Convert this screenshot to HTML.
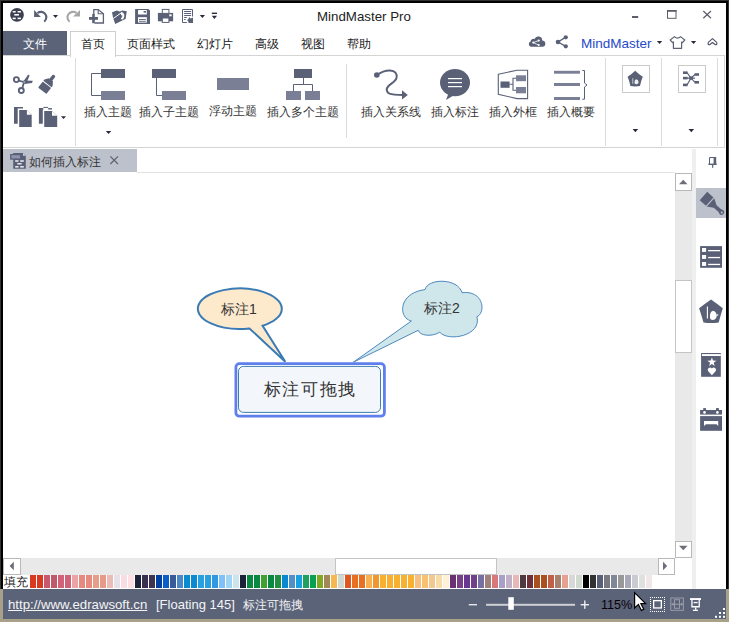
<!DOCTYPE html>
<html><head><meta charset="utf-8">
<style>
html,body{margin:0;padding:0;}
body{width:729px;height:622px;overflow:hidden;position:relative;background:#fff;font-family:"Liberation Sans",sans-serif;color:#333;}
.a{position:absolute;}
.t{position:absolute;font-size:12px;line-height:14px;white-space:nowrap;color:#333;}
svg{position:absolute;overflow:visible;}
</style></head><body>
<!-- window frame -->
<div class="a" style="left:0;top:0;width:729px;height:589px;background:#000;"></div>
<div class="a" style="left:0;top:0;width:729px;height:1px;background:#323232;"></div>
<div class="a" style="left:0;top:0;width:1px;height:589px;background:#323232;"></div>
<div class="a" style="left:728px;top:0;width:1px;height:589px;background:#323232;"></div>
<div class="a" style="left:0;top:589px;width:729px;height:33px;background:#a9a08a;"></div>
<!-- client area -->
<div class="a" style="left:3px;top:3px;width:723px;height:586px;background:#fff;"></div>

<!-- TITLE BAR -->
<div class="t" style="left:317px;top:9px;font-size:13.3px;line-height:15px;color:#222;">MindMaster Pro</div>

<!-- TAB ROW -->
<div class="a" style="left:3px;top:31px;width:64px;height:24px;background:#5b6379;"></div>
<div class="t" style="left:23px;top:37px;color:#fff;">文件</div>
<div class="a" style="left:70px;top:31px;width:44px;height:25px;border:1px solid #cfcfcf;border-bottom:none;background:#fff;"></div>
<div class="t" style="left:81px;top:37px;color:#222;">首页</div>
<div class="t" style="left:127px;top:37px;color:#222;">页面样式</div>
<div class="t" style="left:197px;top:37px;color:#222;">幻灯片</div>
<div class="t" style="left:255px;top:37px;color:#222;">高级</div>
<div class="t" style="left:301px;top:37px;color:#222;">视图</div>
<div class="t" style="left:347px;top:37px;color:#222;">帮助</div>
<div class="t" style="left:581px;top:36px;font-size:13.5px;line-height:15px;color:#2549c6;">MindMaster</div>

<!-- RIBBON PANEL -->
<div class="a" style="left:3px;top:55px;width:67px;height:1px;background:#d4d4d4;"></div>
<div class="a" style="left:116px;top:55px;width:609px;height:1px;background:#d4d4d4;"></div>
<div class="a" style="left:724px;top:55px;width:1px;height:92px;background:#d4d4d4;"></div>
<div class="a" style="left:3px;top:147px;width:722px;height:1px;background:#d4d4d4;"></div>
<div class="a" style="left:75px;top:58px;width:1px;height:88px;background:#dcdcdc;"></div>
<div class="a" style="left:346px;top:64px;width:1px;height:74px;background:#dcdcdc;"></div>
<div class="a" style="left:605px;top:58px;width:1px;height:88px;background:#dcdcdc;"></div>
<div class="a" style="left:661px;top:58px;width:1px;height:88px;background:#dcdcdc;"></div>
<div class="a" style="left:717px;top:58px;width:1px;height:88px;background:#dcdcdc;"></div>

<div class="t" style="left:84px;top:105px;">插入主题</div>
<div class="t" style="left:139px;top:105px;">插入子主题</div>
<div class="t" style="left:209px;top:104px;">浮动主题</div>
<div class="t" style="left:267px;top:105px;">插入多个主题</div>
<div class="t" style="left:361px;top:105px;">插入关系线</div>
<div class="t" style="left:431px;top:105px;">插入标注</div>
<div class="t" style="left:489px;top:105px;">插入外框</div>
<div class="t" style="left:547px;top:105px;">插入概要</div>

<!-- DOC TAB BAR -->
<div class="a" style="left:3px;top:149px;width:134px;height:23px;background:#bdc1cc;"></div>
<div class="t" style="left:29px;top:155px;">如何插入标注</div>
<div class="a" style="left:137px;top:172px;width:538px;height:1px;background:#e2e2e2;"></div>

<!-- right strip + panel -->
<div class="a" style="left:692px;top:149px;width:4px;height:440px;background:#eef0f0;"></div>
<div class="a" style="left:696px;top:188px;width:30px;height:30px;background:#bdc1cc;"></div>

<!-- V SCROLLBAR -->
<div class="a" style="left:675px;top:173px;width:17px;height:385px;background:#e9e9e9;"></div>
<div class="a" style="left:675px;top:173px;width:15px;height:16px;border:1px solid #b8b8b8;background:#fff;"></div>
<div class="a" style="left:675px;top:280px;width:15px;height:71px;border:1px solid #c4c4c4;background:#fff;"></div>
<div class="a" style="left:675px;top:541px;width:15px;height:15px;border:1px solid #b8b8b8;background:#fff;"></div>
<div class="a" style="left:675px;top:558px;width:17px;height:31px;background:#fff;"></div>

<!-- H SCROLLBAR -->
<div class="a" style="left:3px;top:558px;width:672px;height:17px;background:#e9e9e9;"></div>
<div class="a" style="left:3px;top:558px;width:16px;height:15px;border:1px solid #b8b8b8;background:#fff;"></div>
<div class="a" style="left:335px;top:558px;width:160px;height:15px;border:1px solid #c4c4c4;background:#fff;"></div>
<div class="a" style="left:658px;top:558px;width:15px;height:15px;border:1px solid #b8b8b8;background:#fff;"></div>

<!-- PALETTE -->
<div class="t" style="left:4px;top:575px;color:#222;">填充</div>
<svg width="729" height="622" style="left:0;top:0;"><rect x="30" y="575" width="6" height="13" fill="#d93a1f"/><rect x="37" y="575" width="6" height="13" fill="#d93a1f"/><rect x="44" y="575" width="6" height="13" fill="#c95a6e"/><rect x="51" y="575" width="6" height="13" fill="#c05a6a"/><rect x="58" y="575" width="6" height="13" fill="#d06378"/><rect x="65" y="575" width="6" height="13" fill="#d0637a"/><rect x="72" y="575" width="6" height="13" fill="#e9a4a6"/><rect x="79" y="575" width="6" height="13" fill="#e8897f"/><rect x="86" y="575" width="6" height="13" fill="#e88a80"/><rect x="93" y="575" width="6" height="13" fill="#e59e88"/><rect x="100" y="575" width="6" height="13" fill="#e59b88"/><rect x="107" y="575" width="6" height="13" fill="#eabcb8"/><rect x="114" y="575" width="6" height="13" fill="#e8e0e8"/><rect x="121" y="575" width="6" height="13" fill="#fadde3"/><rect x="128" y="575" width="6" height="13" fill="#fde0e4"/><rect x="135" y="575" width="6" height="13" fill="#1c2238"/><rect x="142" y="575" width="6" height="13" fill="#3a3050"/><rect x="149" y="575" width="6" height="13" fill="#3d3352"/><rect x="156" y="575" width="6" height="13" fill="#0040a0"/><rect x="163" y="575" width="6" height="13" fill="#0a5ec8"/><rect x="170" y="575" width="6" height="13" fill="#3a5a98"/><rect x="177" y="575" width="6" height="13" fill="#4a88c8"/><rect x="184" y="575" width="6" height="13" fill="#0a8ad0"/><rect x="191" y="575" width="6" height="13" fill="#0a8ad0"/><rect x="198" y="575" width="6" height="13" fill="#28a0e0"/><rect x="205" y="575" width="6" height="13" fill="#28a0e0"/><rect x="212" y="575" width="6" height="13" fill="#3098e0"/><rect x="219" y="575" width="6" height="13" fill="#80c0f8"/><rect x="226" y="575" width="6" height="13" fill="#a0d4f4"/><rect x="233" y="575" width="6" height="13" fill="#cce4ee"/><rect x="240" y="575" width="6" height="13" fill="#1c2238"/><rect x="247" y="575" width="6" height="13" fill="#088840"/><rect x="254" y="575" width="6" height="13" fill="#088840"/><rect x="261" y="575" width="6" height="13" fill="#40a030"/><rect x="268" y="575" width="6" height="13" fill="#088840"/><rect x="275" y="575" width="6" height="13" fill="#209040"/><rect x="282" y="575" width="6" height="13" fill="#0888d0"/><rect x="289" y="575" width="6" height="13" fill="#5090c8"/><rect x="296" y="575" width="6" height="13" fill="#18a0e0"/><rect x="303" y="575" width="6" height="13" fill="#20a060"/><rect x="310" y="575" width="6" height="13" fill="#08a050"/><rect x="317" y="575" width="6" height="13" fill="#80a820"/><rect x="324" y="575" width="6" height="13" fill="#a08858"/><rect x="331" y="575" width="6" height="13" fill="#f8b850"/><rect x="338" y="575" width="6" height="13" fill="#d0d8d0"/><rect x="345" y="575" width="6" height="13" fill="#e05820"/><rect x="352" y="575" width="6" height="13" fill="#e87020"/><rect x="359" y="575" width="6" height="13" fill="#e87020"/><rect x="366" y="575" width="6" height="13" fill="#f8b050"/><rect x="373" y="575" width="6" height="13" fill="#f09830"/><rect x="380" y="575" width="6" height="13" fill="#f8b030"/><rect x="387" y="575" width="6" height="13" fill="#f8b030"/><rect x="394" y="575" width="6" height="13" fill="#f8b030"/><rect x="401" y="575" width="6" height="13" fill="#f8b030"/><rect x="408" y="575" width="6" height="13" fill="#f8b030"/><rect x="415" y="575" width="6" height="13" fill="#f8c080"/><rect x="422" y="575" width="6" height="13" fill="#f8c070"/><rect x="429" y="575" width="6" height="13" fill="#f0c890"/><rect x="436" y="575" width="6" height="13" fill="#f8dca8"/><rect x="443" y="575" width="6" height="13" fill="#fff0d8"/><rect x="450" y="575" width="6" height="13" fill="#6a3070"/><rect x="457" y="575" width="6" height="13" fill="#784088"/><rect x="464" y="575" width="6" height="13" fill="#683890"/><rect x="471" y="575" width="6" height="13" fill="#704088"/><rect x="478" y="575" width="6" height="13" fill="#7870a0"/><rect x="485" y="575" width="6" height="13" fill="#a08078"/><rect x="492" y="575" width="6" height="13" fill="#d87878"/><rect x="499" y="575" width="6" height="13" fill="#a8a0c8"/><rect x="506" y="575" width="6" height="13" fill="#c0b0c8"/><rect x="513" y="575" width="6" height="13" fill="#e8b8b8"/><rect x="520" y="575" width="6" height="13" fill="#503840"/><rect x="527" y="575" width="6" height="13" fill="#703038"/><rect x="534" y="575" width="6" height="13" fill="#a85020"/><rect x="541" y="575" width="6" height="13" fill="#a85020"/><rect x="548" y="575" width="6" height="13" fill="#c06048"/><rect x="555" y="575" width="6" height="13" fill="#a88070"/><rect x="562" y="575" width="6" height="13" fill="#e8a090"/><rect x="569" y="575" width="6" height="13" fill="#d8d8d8"/><rect x="576" y="575" width="6" height="13" fill="#d0d8d0"/><rect x="583" y="575" width="6" height="13" fill="#000000"/><rect x="590" y="575" width="6" height="13" fill="#323232"/><rect x="597" y="575" width="6" height="13" fill="#586078"/><rect x="604" y="575" width="6" height="13" fill="#787880"/><rect x="611" y="575" width="6" height="13" fill="#808898"/><rect x="618" y="575" width="6" height="13" fill="#989898"/><rect x="625" y="575" width="6" height="13" fill="#a8a8b8"/><rect x="632" y="575" width="6" height="13" fill="#c8ccd0"/><rect x="639" y="575" width="6" height="13" fill="#e0e0e0"/><rect x="646" y="575" width="6" height="13" fill="#f0e8e8"/></svg>

<!-- STATUS BAR -->
<div class="a" style="left:3px;top:589px;width:723px;height:30px;background:#5b6379;"></div>
<div class="t" style="left:8px;top:597px;font-size:13.2px;line-height:15px;color:#f4f4f4;text-decoration:underline;">http://www.edrawsoft.cn</div>
<div class="t" style="left:156px;top:597px;font-size:13px;line-height:15px;color:#f4f4f4;">[Floating 145]</div>
<div class="t" style="left:243px;top:598px;color:#f4f4f4;">标注可拖拽</div>
<div class="t" style="left:601px;top:598px;font-size:12.6px;line-height:15px;color:#0a0008;">115%</div>


<!-- ICONS TITLE -->
<svg width="729" height="622" style="left:0;top:0;">
<g fill="#5a6177">
 <circle cx="17" cy="14.8" r="6.9" fill="#3d4152"/>
 <rect x="12.7" y="11" width="3" height="1.5" fill="#fff"/>
 <rect x="17.6" y="11" width="3.3" height="1.5" fill="#fff"/>
 <rect x="14.3" y="14" width="4.6" height="1.6" fill="#fff"/>
 <rect x="12.7" y="17.6" width="3" height="1.6" fill="#fff"/>
 <rect x="17.6" y="17.6" width="3.3" height="1.6" fill="#fff"/>
 <!-- undo -->
 <polygon points="34.1,9.9 34.1,16.9 40.9,16.9"/>
 <path d="M37.5,13 A4.8,4.8 0 1 1 44.2,21.6" fill="none" stroke="#5a6177" stroke-width="2.1"/>
 <polygon points="53,15 58,15 55.5,18" fill="#2c2840"/>
 <!-- redo -->
 <polygon points="80,10 80,16.6 73,16.6" fill="#a6a6a6"/>
 <path d="M76.5,13 A4.8,4.8 0 1 0 69.6,21.7" fill="none" stroke="#a6a6a6" stroke-width="2.1"/>
 <!-- new -->
 <path d="M93.8,14 V9.6 H98.2 L103.4,13.8 V23 H94.5" fill="none" stroke="#5a6177" stroke-width="1.3"/>
 <path d="M98.2,9.6 V13.8 H103.4" fill="none" stroke="#5a6177" stroke-width="1.1"/>
 <rect x="89" y="17" width="9" height="2.8"/>
 <rect x="92.2" y="14" width="2.6" height="9.2"/>
 <!-- open -->
 <path d="M112,12.2 L117,10.6 L119.5,11.6 L122.5,10.4 L126.8,11.2 L125.6,19 L123.3,20 L115.2,23.9 L113,17.5 Z"/>
 <path d="M113.4,18.4 L121.6,12.6" stroke="#fff" stroke-width="1"/>
 <path d="M121,11.8 Q124.8,12.8 124.3,16.6 Q123.8,19 122,19.8 L120.8,18.6 Q122.6,17 122.4,15.6 L121,15.2 Z" fill="#fff"/>
 <!-- save -->
 <path d="M135.1,8.9 H148.3 L150,10.6 V23.9 H135.1 Z"/>
 <rect x="138" y="10" width="8.8" height="4.4" rx="0.5" fill="#fff"/>
 <rect x="143.6" y="11" width="2.4" height="1.6"/>
 <rect x="138" y="17.2" width="8.8" height="5.4" fill="#fff"/>
 <rect x="139" y="19" width="6.8" height="0.9"/>
 <rect x="139" y="20.8" width="6.8" height="0.9"/>
 <!-- print -->
 <rect x="157.9" y="12.9" width="15.2" height="8.4"/>
 <rect x="162.3" y="9.4" width="6.6" height="4" fill="#fff" stroke="#5a6177" stroke-width="1"/>
 <rect x="162.3" y="18" width="6.6" height="4.4" fill="#fff" stroke="#5a6177" stroke-width="1"/>
 <rect x="169.3" y="14.3" width="2.3" height="2" fill="#fff"/>
 <!-- export -->
 <path d="M186.8,22.5 H182.5 V9.5 H192.5 V16.5" fill="none" stroke="#5a6177" stroke-width="1"/>
 <rect x="184.1" y="11" width="7" height="1"/>
 <rect x="184.1" y="13" width="7" height="1"/>
 <rect x="184.1" y="15" width="7" height="1"/>
 <rect x="184.1" y="17" width="2.7" height="1"/>
 <rect x="184.1" y="19" width="1.6" height="1"/>
 <polygon points="189.2,17 190.5,18.6 192,18 193,17.6 193,23 188.5,23 188.5,21.8 187.2,20.2 188.2,19.2"/>
 <polygon points="199.7,15 205,15 202.4,18" fill="#2c2840"/>
 <rect x="211.8" y="12.6" width="5.2" height="1.4" fill="#2c2840"/>
 <polygon points="211.8,15.7 217,15.7 214.4,19" fill="#2c2840"/>
 <!-- window buttons -->
 <rect x="632" y="16" width="6.2" height="2" fill="#5e5e6a"/>
 <rect x="667.5" y="10.5" width="8.5" height="7.8" fill="none" stroke="#5e5e6a" stroke-width="1"/>
 <rect x="667" y="10" width="9.5" height="1.8" fill="#5e5e6a"/>
 <path d="M703.3,11 L711,18.3 M711,11 L703.3,18.3" stroke="#5e5e6a" stroke-width="1.2"/>
</g>
</svg>


<!-- ICONS RIBBON -->
<svg width="729" height="622" style="left:0;top:0;">
<g fill="#5a6177">
 <!-- cloud -->
 <path d="M531,46.7 A2.7,2.7 0 0 1 530.6,41.5 A2.8,2.8 0 0 1 534.5,39 A4,4 0 0 1 542.2,40.6 A3.1,3.1 0 0 1 543,46.7 Z"/>
 <g stroke="#fff" stroke-width="0.8" fill="#fff">
  <line x1="533.3" y1="42.6" x2="538.7" y2="40.6"/><line x1="533.3" y1="42.6" x2="538.7" y2="45"/>
 </g>
 <circle cx="533.3" cy="42.6" r="1.1" fill="#fff"/><circle cx="538.7" cy="40.6" r="1.1" fill="#fff"/><circle cx="538.7" cy="45" r="1.1" fill="#fff"/>
 <!-- share -->
 <path d="M558,42 L565.8,37.1 M558,42 L565.8,46.4" stroke="#5a6177" stroke-width="1.4"/>
 <circle cx="565.8" cy="37.3" r="2.1"/><circle cx="558" cy="42" r="2.3"/><circle cx="565.8" cy="46.3" r="2.1"/>
 <polygon points="656.9,41 662.2,41 659.55,44" fill="#2c2840"/>
 <!-- shirt -->
 <path d="M674.5,36.6 L670.2,40 L672.6,42.7 L673.4,42 V48.3 H681.6 V42 L682.4,42.7 L684.8,40 L680.5,36.6 Q677.5,39.5 674.5,36.6 Z" fill="none" stroke="#5e6272" stroke-width="1.2" stroke-linejoin="round"/>
 <polygon points="690.9,41 696.2,41 693.55,44" fill="#2c2840"/>
 <!-- collapse chevron -->
 <path d="M712.5,38.6 L716.7,42.4 Q717.6,44.7 715.4,44.7 L712.5,42.5 L709.6,44.7 Q707.4,44.7 708.3,42.4 Z" fill="none" stroke="#4e5266" stroke-width="1.1" stroke-linejoin="round"/>

 <!-- scissors -->
 <circle cx="16.4" cy="79.6" r="2.5" fill="none" stroke="#5a6177" stroke-width="1.9"/>
 <circle cx="21.3" cy="90.5" r="2.5" fill="none" stroke="#5a6177" stroke-width="1.9"/>
 <path d="M18.6,80.6 L24,82 M22.3,88.2 L24,82" stroke="#5a6177" stroke-width="1.8"/>
 <polygon points="22.4,82.8 28.3,74.6 29.6,75.4 26.4,83.2"/>
 <polygon points="23.3,80.6 32.8,80.8 32,83.1 24.5,84"/>
 <circle cx="24.2" cy="82" r="0.8" fill="#c8c8cc"/>
 <!-- brush -->
 <g transform="translate(47.3,84.3) rotate(38)">
  <rect x="-1.7" y="-11.5" width="3.4" height="6.5" rx="1.3"/>
  <polygon points="-2.6,-5.8 2.6,-5.8 5.2,-2 5.2,-0.3 -5.2,-0.3 -5.2,-2"/>
  <rect x="-5.2" y="0.6" width="10.4" height="7.6" rx="0.6"/>
 </g>
 <!-- copy -->
 <path d="M14,107.1 H23 V108.6 H17.7 V123.8 H14 Z"/>
 <path d="M19.2,110 H26.9 L31.7,114.8 V126.9 H19.2 Z"/>
 <polygon points="26.9,110 31.7,114.8 26.9,114.8" fill="#fff"/>
 <!-- paste -->
 <path d="M38.9,108.1 H43.3 V109.5 H42.8 V123.8 H38.9 Z"/>
 <rect x="43.3" y="106.9" width="4.8" height="1"/>
 <rect x="48.1" y="108.1" width="3.9" height="1.4"/>
 <path d="M44.2,111 H52 L57.2,115.8 V126.9 H44.2 Z"/>
 <polygon points="52,111 57.2,115.8 52,115.8" fill="#fff"/>
 <polygon points="61,116.2 66,116.2 63.5,119" fill="#2c2840"/>

 <!-- insert topic -->
 <rect x="101" y="69" width="24" height="9"/>
 <rect x="101" y="91" width="24" height="9" fill="#7a7f96"/>
 <path d="M101,73.5 H91.5 V95.5 H101" fill="none" stroke="#5a6177" stroke-width="1"/>
 <polygon points="105.8,131 111.3,131 108.55,134" fill="#2c2840"/>
 <!-- insert subtopic -->
 <rect x="152" y="69" width="24" height="9"/>
 <rect x="162" y="91" width="24" height="9" fill="#7a7f96"/>
 <path d="M156.5,78 V95.5 H162" fill="none" stroke="#5a6177" stroke-width="1"/>
 <!-- floating -->
 <rect x="217" y="78" width="32" height="12" fill="#7a7f96"/>
 <!-- multi -->
 <rect x="294" y="69" width="18" height="9"/>
 <rect x="286" y="91" width="15" height="9" fill="#7a7f96"/>
 <rect x="305" y="91" width="15" height="9" fill="#7a7f96"/>
 <path d="M303.5,78 V84.5 M293.5,91 V84.5 H312.5 V91" fill="none" stroke="#5a6177" stroke-width="1"/>
 <!-- relationship -->
 <circle cx="376.8" cy="75" r="2.8"/>
 <path d="M376.8,75 C381,72 386,70.3 390,70.4 C395,70.5 397.5,74 396.5,78 C395.5,81.5 391,83.5 388.5,86 C386,88.5 386,92 389.5,93.6 C392,94.6 396,94.9 403,94.9" fill="none" stroke="#5a6177" stroke-width="2"/>
 <polygon points="402,90.3 407.8,94.9 402,99.5"/>
 <!-- callout -->
 <ellipse cx="455" cy="82.6" rx="15" ry="13.6"/>
 <polygon points="449,92 446,100 456,94"/>
 <rect x="448" y="78" width="14" height="1.2" fill="#fff"/>
 <rect x="448" y="82" width="14" height="1.2" fill="#fff"/>
 <rect x="448" y="86" width="14" height="1.2" fill="#fff"/>
 <!-- boundary -->
 <path d="M498.3,74.2 L517,70.3 H527.6 V98.6 H517 L498.3,94.3 Z" fill="none" stroke="#5a6177" stroke-width="1.1"/>
 <rect x="500.5" y="81.5" width="9.1" height="6.3"/>
 <path d="M509.4,84.2 H513 V78.3 H516 M513,84.2 V90.2 H516" fill="none" stroke="#5a6177" stroke-width="1.1"/>
 <rect x="516" y="75.3" width="10" height="5.9" fill="#7a7f96"/>
 <rect x="516" y="87" width="10" height="6.3" fill="#7a7f96"/>
 <!-- summary -->
 <rect x="554" y="70.8" width="26" height="2.9" fill="#7a7f96"/>
 <rect x="554" y="83" width="26" height="3" fill="#7a7f96"/>
 <rect x="554" y="97" width="26" height="3" fill="#7a7f96"/>
 <path d="M582.3,70.5 H584.5 V83 L587,85 L584.5,87 V99.2 H582.3" fill="none" stroke="#5a6177" stroke-width="1"/>
 <!-- style boxes -->
 <rect x="622.5" y="65.5" width="27" height="27" fill="none" stroke="#cacaca" stroke-width="1"/>
 <rect x="678.5" y="65.5" width="27" height="27" fill="none" stroke="#cacaca" stroke-width="1"/>
  <path d="M635.2,70.8 Q639,74.5 642.8,76.8 Q641,81 640,86 Q635.2,86.8 630.4,86 Q629.4,81 627.6,76.8 Q631.4,74.5 635.2,70.8 Z"/>
 <path d="M634.6,83.2 Q634.3,79.6 636.3,79.2 Q638.6,79.6 638.6,82.2 Q638.2,84.2 636.4,84.2 Q635,84.2 634.6,83.2 Z" fill="#fff" opacity="0.9"/>
 <path d="M632.8,78.2 V83.8" stroke="#fff" stroke-width="0.8" opacity="0.8"/>
 <polygon points="632.6,129 638.2,129 635.4,132.2" fill="#2c2840"/>
 <polygon points="688.5,129 694.1,129 691.3,132.2" fill="#2c2840"/>
 <!-- cross icon -->
 <path d="M687,72.7 L691,78.1 L695,74.5 M687,78.1 H695 M687,84.9 L691,78.1 L695,82.3" fill="none" stroke="#5a6177" stroke-width="1.1"/>
 <rect x="683" y="71.4" width="4.6" height="2.6"/>
 <rect x="683" y="76.8" width="4.6" height="2.6"/>
 <rect x="683" y="83.6" width="4.6" height="2.6"/>
 <rect x="689.2" y="76.4" width="3.6" height="3.4"/>
 <rect x="694.6" y="73.2" width="4.4" height="2.6"/>
 <rect x="694.6" y="81" width="4.4" height="2.6"/>
 <!-- doc tab icon -->
 <path d="M13.2,153 H23 L25.8,155.8 V168.7 H13.2 Z"/>
 <rect x="10.1" y="154" width="11" height="5.7"/>
 <rect x="11.4" y="155.2" width="8.6" height="3.2" fill="#8f94aa"/>
 <g fill="#e6e8ee">
 <rect x="15.2" y="160.2" width="3.3" height="1.6"/><rect x="20.2" y="160.2" width="3.6" height="1.6"/>
 <rect x="17.3" y="163" width="4.3" height="1.5"/>
 <rect x="15.2" y="166" width="3.3" height="1.6"/><rect x="20.2" y="166" width="3.6" height="1.6"/>
 </g>
 <polygon points="23,153 25.8,155.8 23,155.8" fill="#d0d3dc"/>
 <path d="M110.3,156.3 L118,164 M118,156.3 L110.3,164" stroke="#5e6272" stroke-width="1.2"/>
</g>
</svg>

<!-- PANEL -->
<svg width="729" height="622" style="left:0;top:0;">
<g fill="#5a6177">
 <!-- pin -->
 <path d="M709.5,164 V157.5 H715.5 V164" fill="none" stroke="#5a6177" stroke-width="1"/>
 <rect x="713.6" y="157" width="2.6" height="7"/>
 <rect x="708.4" y="163.6" width="8.3" height="1.4"/>
 <rect x="712.1" y="165" width="1.2" height="2.8"/>
 <!-- brush selected -->
 <g transform="translate(713.5,205) rotate(-48)">
  <rect x="-5.6" y="-13.5" width="11.2" height="8.4"/>
  <path d="M-5.6,-4 H5.6 L2.2,1.8 H-2.2 Z"/>
  <rect x="-1.9" y="1" width="3.8" height="9"/>
  <circle cx="0" cy="10.8" r="2.6"/>
  <circle cx="0" cy="11.2" r="1" fill="#bdc1cc"/>
 </g>
 <!-- outline -->
 <rect x="700.1" y="246.1" width="21.9" height="21.7"/>
 <g fill="#fff">
 <rect x="702" y="248" width="4.1" height="3.9"/><rect x="702" y="255" width="4.1" height="3.9"/><rect x="702" y="262" width="4.1" height="3.9"/>
 <rect x="708.1" y="250" width="12" height="1.3"/><rect x="708.1" y="256.9" width="12" height="1.3"/><rect x="708.1" y="263.8" width="12" height="1.3"/>
 </g>
 <!-- pentagon -->
 <path d="M711,299.4 Q717,303.5 722.8,308.3 Q720.5,315.5 718.7,322.5 Q711,323.5 703.5,322.5 Q701.5,315.5 699.1,308.3 Q705,303.5 711,299.4 Z"/>
 <path d="M710,318 Q709.5,311.5 713,310.8 Q716.5,311.5 716.8,316 Q716,320 712.5,320 Q710.5,319.8 710,318 Z" fill="#fff"/>
 <path d="M707.4,306.6 V318.5" stroke="#fff" stroke-width="1.1"/>
 <circle cx="717.5" cy="315" r="0.8" fill="#fff"/>
 <!-- clipart -->
 <rect x="701.1" y="353" width="19.7" height="23.8"/>
 <rect x="702" y="354.1" width="18.8" height="1.9" fill="#fff"/>
 <polygon fill="#fff" points="711.9,357.4 713,360.6 716.4,360.7 713.7,362.8 714.7,366.1 711.9,364.1 709.1,366.1 710.1,362.8 707.4,360.7 710.8,360.6"/>
 <path fill="#fff" d="M711.9,375.2 L708.2,371.3 A2.1,2.1 0 0 1 711.9,368.6 A2.1,2.1 0 0 1 715.6,371.3 Z"/>
 <!-- calendar -->
 <rect x="700.1" y="410" width="21.9" height="4.6"/>
 <rect x="703.2" y="408.1" width="2.8" height="2.5"/><rect x="716" y="408.1" width="2.9" height="2.5"/>
 <circle cx="704.5" cy="412.4" r="1.3" fill="#fff"/><circle cx="717.4" cy="412.4" r="1.3" fill="#fff"/>
 <rect x="700.1" y="416.1" width="21.9" height="14.7"/>
 <path d="M704,420.9 H718.2 V426 L716.5,424.2 H706 L704,426 Z" fill="#fff"/>
 <!-- scroll arrows -->
 <polygon points="679,184.2 687.5,184.2 683.25,179.8" fill="#6e6d7a"/>
 <polygon points="679,545.8 687.5,545.8 683.25,550.2" fill="#6e6d7a"/>
 <polygon points="13.8,561.8 13.8,570.2 9.6,566" fill="#6e6d7a"/>
 <polygon points="663,561.8 663,570.2 667.2,566" fill="#6e6d7a"/>
</g>
</svg>

<!-- STATUS ICONS -->
<svg width="729" height="622" style="left:0;top:0;">
 <!-- slider -->
 <rect x="468.8" y="604" width="8.2" height="1.4" fill="#e8e8ec"/>
 <rect x="486" y="603.8" width="89" height="2" fill="#cfd0d4"/>
 <rect x="508.3" y="597.2" width="5.5" height="12.6" fill="#fff"/>
 <rect x="580.7" y="604" width="8.3" height="1.4" fill="#f0f0f2"/>
 <rect x="584.1" y="600.5" width="1.4" height="8.3" fill="#f0f0f2"/>
 <!-- fit icon -->
 <g fill="#fff"><rect x="650" y="597" width="1" height="1"/><rect x="650" y="611" width="1" height="1"/><rect x="652" y="597" width="1" height="1"/><rect x="652" y="611" width="1" height="1"/><rect x="654" y="597" width="1" height="1"/><rect x="654" y="611" width="1" height="1"/><rect x="656" y="597" width="1" height="1"/><rect x="656" y="611" width="1" height="1"/><rect x="658" y="597" width="1" height="1"/><rect x="658" y="611" width="1" height="1"/><rect x="660" y="597" width="1" height="1"/><rect x="660" y="611" width="1" height="1"/><rect x="662" y="597" width="1" height="1"/><rect x="662" y="611" width="1" height="1"/><rect x="664" y="597" width="1" height="1"/><rect x="664" y="611" width="1" height="1"/><rect x="650" y="599" width="1" height="1"/><rect x="664" y="599" width="1" height="1"/><rect x="650" y="601" width="1" height="1"/><rect x="664" y="601" width="1" height="1"/><rect x="650" y="603" width="1" height="1"/><rect x="664" y="603" width="1" height="1"/><rect x="650" y="605" width="1" height="1"/><rect x="664" y="605" width="1" height="1"/><rect x="650" y="607" width="1" height="1"/><rect x="664" y="607" width="1" height="1"/><rect x="650" y="609" width="1" height="1"/><rect x="664" y="609" width="1" height="1"/></g>
 <rect x="653.65" y="600.65" width="7.7" height="7.3" fill="none" stroke="#fff" stroke-width="1.3"/>
 <!-- page icon -->
 <g fill="none" stroke="#9a9daa" stroke-width="1">
  <rect x="670.8" y="598" width="12.6" height="12.3"/>
  <rect x="674.5" y="599.7" width="5" height="8.6"/>
  <path d="M671.5,604.3 H683"/>
 </g>
 <g fill="#9a9daa"><polygon points="671.3,604.3 673.5,602.6 673.5,606"/><polygon points="683.2,604.3 681,602.6 681,606"/></g>
 <!-- presentation -->
 <g fill="#fff">
  <rect x="690" y="598.1" width="11" height="1.9"/>
  <path d="M691.95,600 V606.75 H699.25 V600" fill="none" stroke="#fff" stroke-width="1.3"/>
  <rect x="693.6" y="601.9" width="4" height="1.3"/>
  <rect x="695" y="607.4" width="1.3" height="2.4"/>
  <rect x="692.9" y="609.7" width="5" height="1.3"/>
 </g>
 <!-- grip -->
 <g fill="#fff">
  <rect x="723" y="608" width="2" height="2"/>
  <rect x="719" y="612" width="2" height="2"/><rect x="723" y="612" width="2" height="2"/>
  <rect x="715" y="615.8" width="2" height="2"/><rect x="719" y="615.8" width="2" height="2"/><rect x="723" y="615.8" width="2" height="2"/>
 </g>
 <!-- cursor -->
 <path d="M634.6,592.6 V608 L638.4,604.4 L641.4,610.4 L643.8,609.3 L640.9,603.6 L645.6,603.6 Z" fill="#fff" stroke="#000" stroke-width="1.2" stroke-linejoin="miter"/>
</svg>

<!-- MAP -->
<svg width="729" height="622" style="left:0;top:0;">
 <path d="M249.5,328.45 A42,20.25 0 1 1 262.6,325.76 L285.3,361.8 Z" fill="#fdeacd" stroke="#3a7bb5" stroke-width="2" stroke-linejoin="miter"/>
 <path d="M411.4,321 C398,318 398,293 425,289.6 C428,278 458,278 462,292.7 C484,290 486,313 476.9,316.7 C482,336 448,342 439.8,332.2 C432,337 420,336 418.2,330.3 L353.2,362.3 Z" fill="#cfe7ea" stroke="#4d88c0" stroke-width="1"/>
 <rect x="235.9" y="363.6" width="148.5" height="52.6" rx="3.5" fill="#fff" stroke="#5f7fec" stroke-width="2.8"/>
 <rect x="238.5" y="366.4" width="142" height="46" rx="5" fill="#f3f7fc" stroke="#3d7fb0" stroke-width="1"/>
</svg>
<div class="t" id="c1" style="left:221px;top:301px;font-size:14px;line-height:16px;color:#333;">标注1</div>
<div class="t" id="c2" style="left:424px;top:300px;font-size:14px;line-height:16px;color:#333;">标注2</div>
<div class="t" id="c3" style="left:263.5px;top:380px;font-size:17px;line-height:20px;letter-spacing:1.7px;color:#333;">标注可拖拽</div>

</body></html>
